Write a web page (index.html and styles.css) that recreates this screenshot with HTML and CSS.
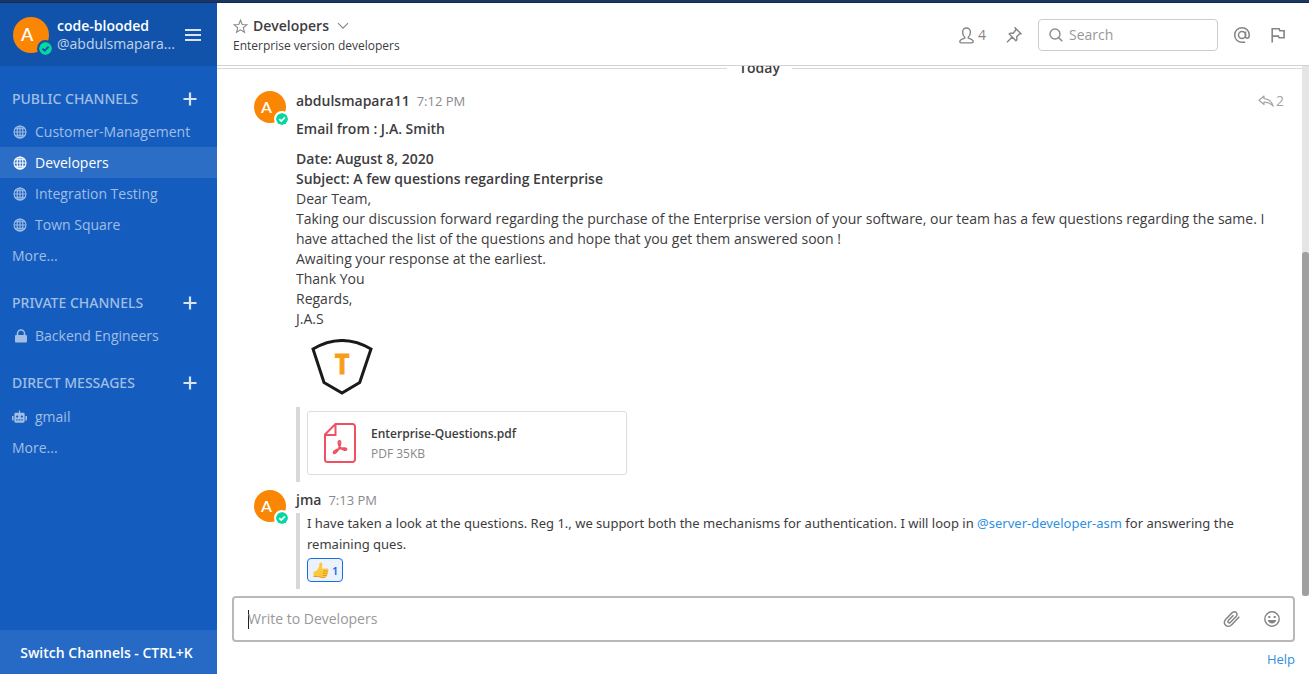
FILE: index.html
```html
<!DOCTYPE html>
<html lang="en">
<head>
<meta charset="utf-8">
<title>Developers - code-blooded</title>
<link rel="stylesheet" href="styles.css">
</head>
<body>
<svg class="defs" aria-hidden="true">
  <symbol id="globe" viewBox="0 0 14 14"><g fill="none" stroke="currentColor" stroke-width="1.1"><circle cx="7" cy="7" r="6"/><ellipse cx="7" cy="7" rx="2.9" ry="6"/><path d="M7 1v12M1 7h12M2 3.8h10M2 10.2h10"/></g></symbol>
  <symbol id="plus" viewBox="0 0 14 14"><path d="M7 .5v13M.5 7h13" stroke="currentColor" stroke-width="2.2"/></symbol>
  <symbol id="check" viewBox="0 0 16 16"><circle cx="8" cy="8" r="8" fill="#06d6a0"/><path d="M4.3 8.200l2.700 2.600 4.900-5" fill="none" stroke="currentColor" stroke-width="2.300"/></symbol>
</svg>
<div class="topbar"></div>
<div class="app">
  <aside class="sidebar">
    <header class="team">
      <div class="avatar avatar-large"><svg class="face" viewBox="0 0 32 32"><circle cx="16" cy="16" r="16" fill="#fb8604"/><text x="12.500" y="21.500" text-anchor="middle" class="avatar-letter">A</text></svg><svg class="status"><use href="#check"/></svg></div>
      <div class="team-text"><div class="team-name">code-blooded</div><div class="user-name">@abdulsmapara...</div></div>
      <button class="icon-button menu" aria-label="Main menu"><svg width="16" height="12" viewBox="0 0 16 12"><path d="M0 1h16M0 6h16M0 11h16" stroke="currentColor" stroke-width="2"/></svg></button>
    </header>
    <nav class="channels">
      <section class="group">
        <h2 class="group-title">PUBLIC CHANNELS <button class="icon-button" aria-label="Add public channel"><svg width="14" height="14"><use href="#plus"/></svg></button></h2>
        <a class="channel" href="#"><svg class="channel-icon"><use href="#globe"/></svg>Customer-Management</a>
        <a class="channel active" href="#"><svg class="channel-icon"><use href="#globe"/></svg>Developers</a>
        <a class="channel" href="#"><svg class="channel-icon"><use href="#globe"/></svg>Integration Testing</a>
        <a class="channel" href="#"><svg class="channel-icon"><use href="#globe"/></svg>Town Square</a>
        <a class="channel more" href="#">More...</a>
      </section>
      <section class="group">
        <h2 class="group-title">PRIVATE CHANNELS <button class="icon-button" aria-label="Add private channel"><svg width="14" height="14"><use href="#plus"/></svg></button></h2>
        <a class="channel" href="#"><svg class="channel-icon" viewBox="0 0 14 14"><rect x="2" y="6" width="12" height="7.500" rx="1" fill="currentColor"/><path d="M4.500 6.500V4.500a3.500 3.500 0 0 1 7 0v2" fill="none" stroke="currentColor" stroke-width="1.500"/></svg>Backend Engineers</a>
      </section>
      <section class="group direct">
        <h2 class="group-title">DIRECT MESSAGES <button class="icon-button" aria-label="Add direct message"><svg width="14" height="14"><use href="#plus"/></svg></button></h2>
        <a class="channel bot" href="#"><svg class="channel-icon" viewBox="0 0 16 14"><path fill="currentColor" fill-rule="evenodd" d="M7.400 0h1.200v2.500H12a1.500 1.500 0 0 1 1.500 1.500v7.500A1.500 1.500 0 0 1 12 13H4a1.500 1.500 0 0 1-1.500-1.500V4A1.500 1.500 0 0 1 4 2.500h3.400zM0 5.800h1.700v5H1A1 1 0 0 1 0 9.800zM14.300 5.800H16v4a1 1 0 0 1-1 1h-.7zM5.500 5.300a1.200 1.200 0 1 0 0 2.400 1.200 1.200 0 0 0 0-2.400zM10.500 5.300a1.200 1.200 0 1 0 0 2.400 1.200 1.200 0 0 0 0-2.400zM4.500 9.500v1.200H6V9.500zM7.200 9.500v1.200h1.600V9.500zM10 9.500v1.200h1.500V9.500z"/></svg>gmail</a>
        <a class="channel more" href="#">More...</a>
      </section>
    </nav>
    <button class="switcher">Switch Channels - CTRL+K</button>
  </aside>
  <main class="main">
    <header class="header">
      <div class="heading">
        <div class="title-row">
          <button class="icon-button star" aria-label="Favourite"><svg width="15" height="15" viewBox="0 0 15 15"><path d="M7.500 1.200l1.700 4.300 4.700.3-3.600 3 1.200 4.500-4-2.500-4 2.500 1.200-4.500-3.600-3 4.700-.3z" fill="none" stroke="currentColor" stroke-width="1.100"/></svg></button>
          <h1 class="title">Developers</h1>
          <button class="icon-button" aria-label="Channel menu"><svg width="12" height="8" viewBox="0 0 12 8"><path d="M1 1.200l5 5 5-5" fill="none" stroke="currentColor" stroke-width="1.200"/></svg></button>
        </div>
        <div class="purpose">Enterprise version developers</div>
      </div>
      <div class="tools">
        <button class="icon-button members" aria-label="4 members"><svg width="15" height="17" viewBox="0 0 15 17"><path d="M7.500 1C5 1 3.600 2.700 3.600 5c0 2 .9 4.300 2.200 5.300v.8L2.600 12.300C1.300 12.800.8 13.600.8 14.600c0 .8.500 1.300 1.300 1.300h10.800c.8 0 1.300-.5 1.300-1.300 0-1-.5-1.800-1.800-2.300L9.200 11.100v-.8C10.500 9.300 11.400 7 11.400 5c0-2.300-1.400-4-3.900-4z" fill="none" stroke="currentColor" stroke-width="1.400"/></svg>4</button>
        <button class="icon-button" aria-label="Pinned posts"><svg width="16" height="16" viewBox="0 0 16 16"><path d="M9.300 1l5.700 5.700-1.800.5-2.500 2.600.2 3-1 1L3.200 7.100l1-1 3 .2L9.800 3zM6 10.200L1 15.300" fill="none" stroke="currentColor" stroke-width="1.400"/></svg></button>
        <label class="search"><svg width="14" height="14" viewBox="0 0 14 14"><circle cx="6" cy="6" r="5" fill="none" stroke="#8c8c8c" stroke-width="1.400"/><path d="M9.600 9.600l3.700 3.700" stroke="#8c8c8c" stroke-width="1.500"/></svg><input type="text" placeholder="Search" aria-label="Search"></label>
        <button class="icon-button" aria-label="Recent mentions"><svg width="18" height="18" viewBox="0 0 18 18"><g fill="none" stroke="currentColor" stroke-width="1.500"><circle cx="9" cy="9" r="3.500"/><path d="M12.500 5.500v4.700c0 1.400.8 2 1.800 2 1.300 0 2-1.200 2-3.200a7.300 7.300 0 1 0-7.300 7.300h3.200"/></g></svg></button>
        <button class="icon-button" aria-label="Saved posts"><svg width="14" height="16" viewBox="0 0 14 16"><path d="M1.200 15.500V1.800h7l.6 1.900h4.300v7.100H8l-.6-1.700H1.200" fill="none" stroke="currentColor" stroke-width="1.600"/></svg></button>
      </div>
    </header>
    <div class="feed">
      <div class="posts">
        <div class="day"><span>Today</span></div>
        <article class="post">
          <div class="avatar"><svg class="face" viewBox="0 0 32 32"><circle cx="16" cy="16" r="16" fill="#fb8604"/><text x="12.500" y="21.500" text-anchor="middle" class="avatar-letter">A</text></svg><svg class="status"><use href="#check"/></svg></div>
          <div class="content">
            <div class="meta"><strong>abdulsmapara11</strong><time>7:12 PM</time><button class="icon-button replies" aria-label="2 replies"><svg width="16" height="12" viewBox="0 0 16 12"><path d="M6 1L1 5.300l5 4.200V7.100c3.800-.2 6.600 1 9.200 4.100C13.800 6.600 10.800 4 6 3.600z" fill="none" stroke="currentColor" stroke-width="1.200" stroke-linejoin="round"/></svg>2</button></div>
            <p class="subject">Email from : J.A. Smith</p>
            <div class="body"><strong>Date: August 8, 2020</strong><br><strong>Subject: A few questions regarding Enterprise</strong><br>Dear Team,<br>Taking our discussion forward regarding the purchase of the Enterprise version of your software, our team has a few questions regarding the same. I have attached the list of the questions and hope that you get them answered soon !<br>Awaiting your response at the earliest.<br>Thank You<br>Regards,<br>J.A.S</div>
            <svg class="logo" width="62" height="56" viewBox="0 0 62 56" role="img" aria-label="T shield"><path d="M2 10Q31-7 60 10L48.700 43.500 31 54 13 43.500z" fill="none" stroke="#1a1a1a" stroke-width="3"/><text class="logo-letter" x="31" y="35" text-anchor="middle">T</text></svg>
            <div class="attachment">
              <a class="file" href="#">
                <svg width="32" height="40" viewBox="0 0 32 40"><g fill="none" stroke="#f0505f" stroke-width="2"><path d="M11.500 1H28.500A2.500 2.500 0 0 1 31 3.500V36.500A2.500 2.500 0 0 1 28.500 39H3.500A2.500 2.500 0 0 1 1 36.500V11.500zM11.500 1v11H1"/><path stroke-width="1.800" d="M15.800 24c-1.600-2.800-2-6-.6-6.200 1.800-.2 1.600 3 .1 6.500-1.400 3.500-4 6.500-5.400 5.900-1.500-.8 1.600-3.500 5.900-4.500 4.100-1 7-.5 6.700.8-.4 1.400-4.400.4-6.700-2.500z"/></g></svg>
                <span class="file-text"><span class="file-name">Enterprise-Questions.pdf</span><span class="file-info">PDF 35KB</span></span>
              </a>
            </div>
          </div>
        </article>
        <article class="post second">
          <div class="avatar"><svg class="face" viewBox="0 0 32 32"><circle cx="16" cy="16" r="16" fill="#fb8604"/><text x="12.500" y="21.500" text-anchor="middle" class="avatar-letter">A</text></svg><svg class="status"><use href="#check"/></svg></div>
          <div class="content">
            <div class="meta"><strong>jma</strong><time>7:13 PM</time></div>
            <div class="comment">
              <p>I have taken a look at the questions. Reg 1., we support both the mechanisms for authentication. I will loop in <a href="#">@server-developer-asm</a> for answering the remaining ques.</p>
              <button class="reaction" aria-label="Thumbs up, 1"><svg width="16" height="16" viewBox="0 0 16 16"><path d="M.5 9.800c1.600 0 3-.8 4.200-2.500C5.900 5.600 6.300 4.400 6.300 2.300 6.300.9 7 .3 7.900.4c1.300.2 1.800 2 1.300 4.200L8.900 6.500h5c1.200 0 1.700.6 1.700 1.400 0 .6-.3 1-.7 1.200.6.8.5 1.700-.3 2.200.4.900.1 1.600-.6 2 .1 1.300-.6 2.100-2 2.200-2.500.2-5 0-6.500-.9H.5z" fill="#fdc93a"/><path d="M10 9h4.700M9.800 11.300h4.700M9.700 13.500h4.200M.5 14.500h5c1.500.9 4 1.200 6.500 1" fill="none" stroke="#d78b21" stroke-width=".8"/></svg>1</button>
            </div>
          </div>
        </article>
      </div>
      <div class="scrollbar"><div class="thumb"></div></div>
    </div>
    <footer class="composer">
      <div class="box">
        <span class="caret"></span>
        <input type="text" placeholder="Write to Developers" aria-label="Write to Developers">
        <button class="icon-button" aria-label="Attach file"><svg width="18" height="18" viewBox="0 0 18 18"><path d="M16.300 6.800L9 14.400c-1.800 1.900-4.600 2.600-6.400.9-1.900-1.800-1.600-4.300.2-6.100L9 2.900c1.200-1.200 3-1.600 4.200-.4 1.300 1.200 1 2.900-.1 4L7.500 12.200c-.7.700-1.600.9-2.200.3-.6-.6-.5-1.500.2-2.200l5-5.100" fill="none" stroke="currentColor" stroke-width="1.500"/></svg></button>
        <button class="icon-button" aria-label="Emoji"><svg width="16" height="16" viewBox="0 0 16 16"><circle cx="8" cy="8" r="7.200" fill="none" stroke="currentColor" stroke-width="1.400"/><rect x="4.300" y="5" width="2" height="2" fill="currentColor"/><rect x="9.700" y="5" width="2" height="2" fill="currentColor"/><path d="M3.800 9h8.400A4.300 4.300 0 0 1 3.800 9z" fill="currentColor"/></svg></button>
      </div>
      <a class="help" href="#">Help</a>
    </footer>
  </main>
</div>
</body>
</html>
```
FILE: styles.css
```css
* { box-sizing: border-box; }
body {
  margin: 0;
  height: 100vh;
  display: flex;
  flex-direction: column;
  overflow: hidden;
  font: 14px/20px "Open Sans", "Noto Sans", sans-serif;
  color: #3d3c40;
  background: #fff;
}
h1, h2, p { margin: 0; }
a { color: #2f8fe0; text-decoration: none; }
strong { font-weight: 600; }
button, input { font: inherit; }
svg { display: block; flex: none; }
.defs { position: absolute; width: 0; height: 0; }
.icon-button {
  display: flex;
  align-items: center;
  padding: 0;
  border: 0;
  background: none;
  color: inherit;
}
.topbar { flex: none; height: 3px; background: #1b3663; border-bottom: 1px solid #142b50; }
.app { flex: 1; display: flex; min-height: 0; }

.sidebar { flex: none; width: 217px; display: flex; flex-direction: column; background: #145dbf; color: #a1bee5; }
.team { display: flex; align-items: center; gap: 8px; height: 63px; padding: 0 16px 0 13px; background: #1153ab; }
.team-text { flex: 1; line-height: 18px; white-space: nowrap; }
.team-name { color: #fff; font-weight: 600; }
.user-name { color: #c4d4eb; }
.menu { color: #d8e4f4; }
.avatar { position: relative; flex: none; width: 32px; height: 32px; color: #fff; }
.avatar-large { width: 36px; height: 36px; color: #1153ab; }
.face { width: 100%; height: 100%; }
.avatar-letter { font: 600 16px Lato, sans-serif; fill: #fff; }
.status { position: absolute; right: -4px; bottom: -4px; width: 16px; height: 16px; border: 2px solid #fff; border-radius: 50%; background: #fff; }
.avatar-large .status { right: -5px; bottom: -4px; width: 17px; height: 17px; border-color: #1153ab; background: #1153ab; }
.channels { flex: 1; padding-top: 16px; }
.group { margin-bottom: 15px; }
.group-title { display: flex; justify-content: space-between; align-items: center; height: 34px; padding: 0 20px 0 12px; font: 500 14px/20px "Noto Sans", "Open Sans", sans-serif; color: #a1bee5; }
.group-title .icon-button { color: #d8e4f4; }
.channel { display: flex; align-items: center; gap: 8px; height: 31px; padding-left: 13px; color: #a1bee5; }
.channel-icon { width: 14px; height: 14px; }
.active { color: #fff; background: #2c6dc5; }
.more { padding-left: 12px; }
.bot { padding-left: 12px; margin-top: 1px; }
.bot .channel-icon { width: 15px; }
.switcher { height: 44px; border: 0; background: #266ac6; color: #fff; font-weight: 600; padding: 2px 4px 0 0; }

.main { flex: 1; min-width: 0; display: flex; flex-direction: column; }
.header { flex: none; height: 63px; display: flex; justify-content: space-between; align-items: center; padding: 2px 24px 0 16px; border-bottom: 1px solid #d2d2d2; }
.heading { padding-top: 2px; }
.title-row { display: flex; align-items: center; gap: 8px; color: #888; }
.star { margin-right: -3px; }
.title { font-size: 14px; font-weight: 600; color: #3d3c40; }
.purpose { font-size: 12px; }
.tools { display: flex; align-items: center; gap: 20px; color: #858585; }
.members { gap: 4px; }
.search { display: flex; align-items: center; gap: 6px; width: 180px; height: 32px; margin: 0 -5px 0 -4px; padding: 0 10px; border: 1px solid #ccc; border-radius: 4px; }
input { min-width: 0; flex: 1; width: 100%; padding: 0; border: 0; outline: 0; background: none; color: #3d3c40; }
input::placeholder { color: #999; opacity: 1; }

.feed { flex: 1; min-height: 0; display: flex; }
.posts { flex: 1; min-width: 0; display: flex; flex-direction: column; justify-content: flex-end; overflow: hidden; padding-bottom: 7px; }
.day { display: flex; align-items: center; gap: 12px; margin-bottom: 13px; font-weight: 600; }
.day::before, .day::after { content: ""; flex: 1; height: 1px; background: #d8d8d8; }
.post { display: flex; gap: 10px; padding: 0 18px 0 37px; }
.content { flex: 1; min-width: 0; }
.meta { display: flex; align-items: center; gap: 7px; }
time { font-size: 13px; color: #8a8a8d; }
.replies { gap: 2px; margin-left: auto; color: #a5a5a5; }
.subject { margin: 8px 0 10px; font-weight: 600; }
.logo { margin: 10px 0 12px 15px; }
.logo-letter { font: bold 26px "DejaVu Sans Mono", monospace; fill: #f79c1b; stroke: #f79c1b; stroke-width: 1px; }
.attachment { padding: 4px 0 7px 7px; border-left: 4px solid #d8d8d8; }
.file { display: flex; align-items: center; gap: 15px; width: 320px; height: 64px; padding: 0 16px; border: 1px solid #ddd; border-radius: 3px; font-size: 12px; color: #3d3c40; }
.file-text { padding-top: 2px; }
.file-name, .file-info { display: block; }
.file-name { font-weight: 600; }
.file-info { color: #88888a; }
.second { margin-top: 8px; }
.comment { margin-top: 3px; padding-left: 7px; padding-bottom: 7px; border-left: 4px solid #d8d8d8; font: 13px/21px "Noto Sans", "Open Sans", sans-serif; }
.reaction { display: flex; align-items: center; gap: 3px; width: 36px; height: 24px; margin-top: 3px; padding: 0 5px; border: 1px solid #166de0; border-radius: 4px; background: #ebf2fc; color: #166de0; font-size: 11px; font-weight: 600; }
.scrollbar { flex: none; width: 7px; display: flex; flex-direction: column; justify-content: flex-end; background: #e5e5e5; }
.thumb { height: 65%; border-radius: 3px; background: #9f9f9f; }

.composer { flex: none; padding: 0 14px 5px 15px; }
.box { display: flex; align-items: center; gap: 23px; height: 46px; padding: 0 13px 0 14px; border: 2px solid #b9b9b9; border-radius: 4px; color: #858585; }
.caret { width: 1px; height: 19px; margin-right: -24px; background: #222; }
.help { display: block; margin-top: 7px; text-align: right; font-size: 13px; }
```
